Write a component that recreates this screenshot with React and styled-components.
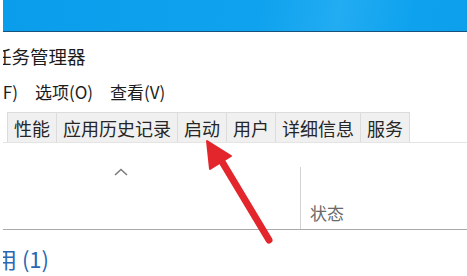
import React from 'react'
import styled, { createGlobalStyle } from 'styled-components'

const GlobalStyle = createGlobalStyle`
    html, body {
        margin: 0;
        padding: 0;
        background: #fff;
    }
    body {
        width: 467px;
        height: 276px;
        overflow: hidden;
        font-family: "Noto Sans CJK SC", "Noto Sans", sans-serif;
    }
`

const tabs = ['性能', '应用历史记录', '启动', '用户', '详细信息', '服务']
const menus = ['文件(F)', '选项(O)', '查看(V)']

const App = () => (
    <Page>
        <GlobalStyle />
        <Window>
            <TitleBar />
            <Title>任务管理器</Title>
            <MenuBar>
                {menus.map((m) => (
                    <MenuItem key={m}>{m}</MenuItem>
                ))}
            </MenuBar>
            <TabStrip>
                {tabs.map((t) => (
                    <Tab key={t}>{t}</Tab>
                ))}
            </TabStrip>
            <HeaderRow>
                <NameCol>
                    <svg width="14" height="8" viewBox="0 0 14 8">
                        <polyline points="1,7 7,1.5 13,7" fill="none" stroke="#7c7c7c" strokeWidth="1.6" />
                    </svg>
                </NameCol>
                <StatusCol>状态</StatusCol>
            </HeaderRow>
            <GroupTitle>已启用 (1)</GroupTitle>
        </Window>
        <Arrow width="467" height="276" viewBox="0 0 467 276">
            <line x1="221" y1="160" x2="269" y2="240" stroke="#e2262c" strokeWidth="7" strokeLinecap="round" />
            <polygon points="207,141 210,169 231,156" fill="#e2262c" stroke="#e2262c" strokeWidth="2" strokeLinejoin="round" />
        </Arrow>
    </Page>
)

const Page = styled.div`
    position: relative;
    width: 467px;
    height: 276px;
    padding-left: 3px;
    box-sizing: border-box;
    overflow: hidden;
    background: #fff;
`

const Window = styled.div`
    height: 100%;
    overflow: hidden;
`

const TitleBar = styled.div`
    height: 31px;
    background: linear-gradient(100deg, #0a9deb 0%, #0fa2ee 55%, #22acf2 72%, #0ea2ee 88%, #0b9fec 100%);
    border-bottom: 1px solid #17527c;
`

const Title = styled.div`
    height: 48px;
    display: flex;
    align-items: center;
    margin-left: -10px;
    font-size: 18.5px;
    color: #1c1c1c;
    white-space: nowrap;
`

const MenuBar = styled.div`
    height: 22px;
    display: flex;
    align-items: center;
    gap: 17px;
    font-size: 17px;
    color: #1c1c1c;
    white-space: nowrap;
`

const MenuItem = styled.span`
    &:first-child {
        margin-left: -40px;
    }
`

const TabStrip = styled.div`
    margin-top: 10px;
    height: 31px;
    box-sizing: border-box;
    display: flex;
    padding-left: 5px;
    border-bottom: 1px solid #e4e4e4;
`

const Tab = styled.div`
    display: flex;
    align-items: center;
    padding: 0 6px;
    margin-left: -1px;
    font-size: 18px;
    color: #262626;
    background: #f0f0f0;
    border: 1px solid #dcdcdc;
    border-bottom: none;
    white-space: nowrap;
`

const HeaderRow = styled.div`
    margin-top: 24px;
    height: 63px;
    box-sizing: border-box;
    display: grid;
    grid-template-columns: 297px 1fr;
    border-bottom: 1px solid #a9a9a9;
`

const NameCol = styled.div`
    padding: 1px 0 0 111px;
    line-height: 0;
`

const StatusCol = styled.div`
    display: flex;
    align-items: flex-end;
    padding: 0 0 6px 9px;
    border-left: 1px solid #d2d2d2;
    font-size: 17px;
    line-height: 20px;
    color: #6a6a6a;
`

const GroupTitle = styled.div`
    padding-top: 15px;
    margin-left: -52px;
    font-size: 22px;
    line-height: 26px;
    color: #2b68b3;
    white-space: nowrap;
`

const Arrow = styled.svg`
    position: absolute;
    top: 0;
    left: 0;
    pointer-events: none;
`

export default App
